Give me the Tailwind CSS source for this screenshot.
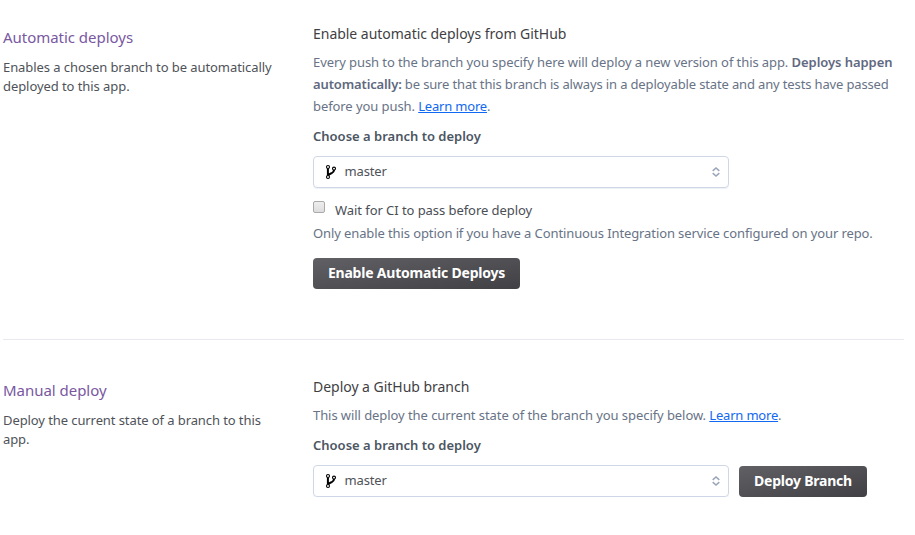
<!DOCTYPE html>
<html lang="en">
<head>
<meta charset="utf-8">
<title>Deploy</title>
<script src="https://cdn.jsdelivr.net/npm/@tailwindcss/browser@4"></script>
</head>
<body class="bg-white font-['Noto_Sans',sans-serif] text-[13px] text-[#4f5359]">
<svg class="hidden">
  <symbol id="branch" viewBox="0 0 12 16"><g fill="none" stroke="#000"><circle cx="3" cy="3" r="1.5" stroke-width="1.1"/><circle cx="3" cy="13" r="1.5" stroke-width="1.1"/><circle cx="9" cy="4.6" r="1.5" stroke-width="1.1"/><path d="M2.9 4.5V11.5M9 6.1C9 8.8 7.4 8.7 5.8 9.5C4.6 10.1 3.6 10.6 3.2 11.5" stroke-width="2"/></g></symbol>
  <symbol id="sort" viewBox="0 0 8 10"><path d="M.7 3.9L4 1L7.3 3.9M.7 6.1L4 9L7.3 6.1" fill="none" stroke="#9aa5b8" stroke-width="1.5"/></symbol>
</svg>
<main class="ml-[3px] w-[901px] whitespace-nowrap">
  <section class="flex h-[340px] border-b border-[#e8e8f0]">
    <div class="w-[310px] shrink-0 pt-[26px]">
      <h2 class="text-[15px] leading-[22px] tracking-[-0.03px] text-[#79589f]">Automatic deploys</h2>
      <p class="mt-[10px] leading-[19px] tracking-[-0.07px]">Enables a chosen branch to be automatically<br>deployed to this app.</p>
    </div>
    <div class="w-[591px] pt-[24px]">
      <h3 class="text-[14px] leading-[20px] tracking-[-0.03px] text-[#3f3f44]">Enable automatic deploys from GitHub</h3>
      <p class="mt-[7px] leading-[22px] text-[#687386]"><span class="tracking-[-0.085px]">Every push to the branch you specify here will deploy a new version of this app. </span><b class="font-semibold tracking-[-0.06px] text-[#5f6980]">Deploys happen</b><br><b class="font-semibold tracking-[-0.13px] text-[#5f6980]">automatically:</b><span class="tracking-[-0.145px]"> be sure that this branch is always in a deployable state and any tests have passed</span><br><span class="tracking-[-0.08px]">before you push. </span><a class="tracking-[-0.19px] text-[#1168f2] underline">Learn more</a>.</p>
      <p class="mt-[9px] leading-[20px] font-semibold text-[#4c5663]">Choose a branch to deploy</p>
      <div class="mt-[10px] flex h-8 w-[416px] items-center rounded-[4px] border border-[#cfd7e6] pr-2 pl-[11px] shadow-[0_1px_1px_#eef1f6]">
        <svg class="h-4 w-3"><use href="#branch"/></svg><span class="ml-[7.5px] tracking-[-0.15px]">master</span><svg class="ml-auto h-[10px] w-2"><use href="#sort"/></svg>
      </div>
      <div class="mt-[12px] flex h-5 leading-[20px]"><i class="mt-px h-3 w-3 rounded-[2px] border border-[#aaa] bg-linear-to-b from-[#eee] to-[#ddd]"></i><span class="ml-[10px] tracking-[-0.06px] text-[#4a4e55]">Wait for CI to pass before deploy</span></div>
      <p class="mt-[2px] leading-[22px] tracking-[-0.105px] text-[#687386]">Only enable this option if you have a Continuous Integration service configured on your repo.</p>
      <button class="mt-[14px] block h-[31px] w-[207px] rounded-[4px] bg-linear-to-br from-[#606065] to-[#414045] pb-0.5 text-[14px] font-bold tracking-[-0.21px] text-white">Enable Automatic Deploys</button>
    </div>
  </section>
  <section class="flex">
    <div class="w-[310px] shrink-0 pt-[39px]">
      <h2 class="text-[15px] leading-[22px] tracking-[-0.03px] text-[#79589f]">Manual deploy</h2>
      <p class="mt-[10px] leading-[19px] tracking-[-0.09px]">Deploy the current state of a branch to this<br>app.</p>
    </div>
    <div class="w-[591px] pt-[37px]">
      <h3 class="text-[14px] leading-[20px] tracking-[-0.03px] text-[#3f3f44]">Deploy a GitHub branch</h3>
      <p class="mt-[7px] leading-[22px] text-[#687386]"><span class="tracking-[-0.07px]">This will deploy the current state of the branch you specify below. </span><a class="tracking-[-0.19px] text-[#1168f2] underline">Learn more</a>.</p>
      <p class="mt-[9px] leading-[20px] font-semibold text-[#4c5663]">Choose a branch to deploy</p>
      <div class="mt-[10px] flex gap-[10px]">
        <div class="flex h-8 w-[416px] items-center rounded-[4px] border border-[#cfd7e6] pr-2 pl-[11px] shadow-[0_1px_1px_#eef1f6]">
          <svg class="h-4 w-3"><use href="#branch"/></svg><span class="ml-[7.5px] tracking-[-0.15px]">master</span><svg class="ml-auto h-[10px] w-2"><use href="#sort"/></svg>
        </div>
        <button class="mt-px h-[31px] w-32 rounded-[4px] bg-linear-to-br from-[#606065] to-[#414045] pb-0.5 text-[14px] font-bold tracking-[-0.22px] text-white">Deploy Branch</button>
      </div>
    </div>
  </section>
</main>
</body>
</html>
